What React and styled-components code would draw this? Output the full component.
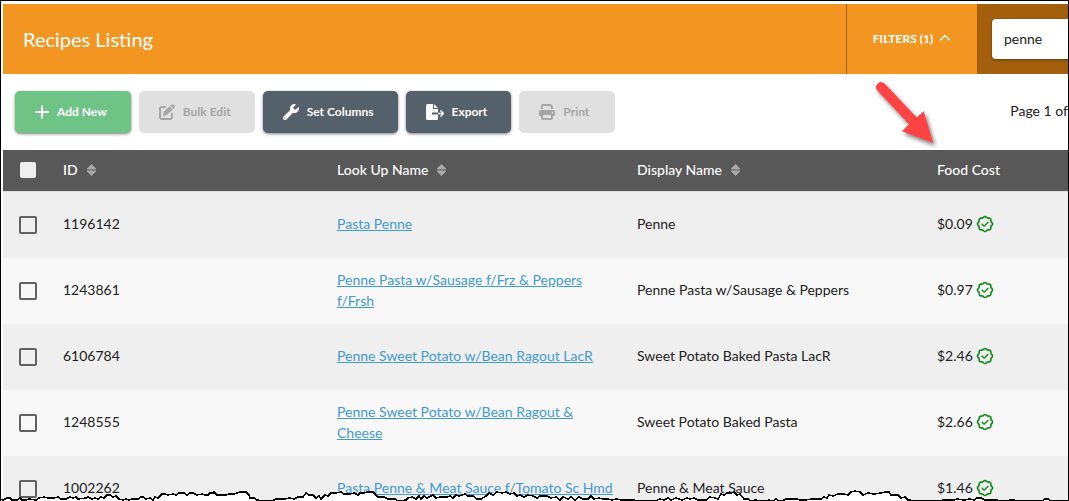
import styled, { createGlobalStyle } from "styled-components";
import { FaWrench } from "react-icons/fa";
import { FaPenToSquare, FaPrint } from "react-icons/fa6";

const palette = {
    orange: '#f39621',
    brown: '#a35f0b',
    green: '#6ec485',
    slate: '#55616a',
    disabled: '#e0e0e0',
    disabledText: '#a6a6a6',
    head: '#585858',
    link: '#3f9bd0',
    text: '#212121',
    ok: '#138a1b',
}

const GlobalStyle = createGlobalStyle`
    * {
        box-sizing: border-box;
    }
    body {
        margin: 0;
        background: #fff;
        color: ${palette.text};
        font-family: Lato, "Liberation Sans", sans-serif;
        font-size: 14px;
        line-height: 21px;
    }
    button, input {
        font-family: inherit;
    }
`

// black frame around the page, the bottom is closed by the torn edge
const Frame = styled.div`
    position: relative;
    height: 100vh;
    overflow: hidden;
    border: 1px solid #000;
    border-bottom: none;
    padding: 3px 0 0 2px;
`

const Header = styled.header`
    display: flex;
    height: 70px;
    background: ${palette.orange};
    color: #fff;
`

const Title = styled.h1`
    flex: 1;
    margin: 0;
    padding: 0 20px;
    align-self: center;
    font-size: 20px;
    font-weight: 400;
    line-height: 28px;
`

const FilterButton = styled.button`
    display: flex;
    align-items: center;
    justify-content: center;
    gap: 6px;
    width: 131px;
    padding: 0 0 2px;
    border: none;
    border-left: 1px solid ${palette.brown};
    background: none;
    color: #fff;
    font-size: 12px;
    font-weight: 700;
`

const SearchArea = styled.div`
    display: flex;
    align-items: center;
    width: 91px;
    padding-left: 15px;
    overflow: hidden;
    background: ${palette.brown};
`

const SearchInput = styled.input`
    flex: none;
    width: 200px;
    height: 40px;
    padding: 0 12px 2px;
    border: none;
    border-radius: 4px;
    background: #fff;
    box-shadow: 0 1px 3px rgba(0, 0, 0, 0.4);
    color: ${palette.text};
    font-size: 14px;
`

const Toolbar = styled.div`
    display: flex;
    align-items: center;
    gap: 8px;
    padding: 17px 0 17px 12px;
`

const ToolButton = styled.button`
    display: flex;
    align-items: center;
    gap: 8px;
    min-width: 96px;
    height: 42px;
    padding: 0 24px 0 20px;
    border: none;
    border-radius: 5px;
    background: ${({ $color }) => $color};
    box-shadow: 0 1px 3px rgba(0, 0, 0, 0.5);
    color: #fff;
    font-size: 12px;
    font-weight: 700;
    line-height: 18px;
    &:disabled {
        background: ${palette.disabled};
        box-shadow: none;
        color: ${palette.disabledText};
    }
`

const ButtonLabel = styled.span`
    padding-bottom: 1px;
`

const PageInfo = styled.span`
    margin-left: auto;
    padding-bottom: 3px;
    white-space: nowrap;
`

const Table = styled.table`
    width: 100%;
    table-layout: fixed;
    border-collapse: separate;
    border-spacing: 0;
`

const Col = styled.col`
    width: ${({ $width }) => $width};
`

const HeadCell = styled.th`
    height: 42px;
    padding: 0 10px 2px;
    border-bottom: 1px solid #e0e0e0;
    background: ${palette.head};
    color: #fff;
    font-weight: 500;
    text-align: left;
`

const HeadLabel = styled.span`
    display: flex;
    align-items: center;
    gap: 9px;
`

const Row = styled.tr`
    background: #f8f8f8;
    &:nth-child(odd) {
        background: #efefef;
    }
`

const Cell = styled.td`
    height: 66px;
    padding: 0 10px 3px;
`

const CheckCell = styled(Cell)`
    padding: 0 0 0 16px;
`

const CheckHeadCell = styled(HeadCell)`
    padding: 0 0 1px 17px;
`

const Checkbox = styled.input`
    appearance: none;
    display: block;
    width: 18px;
    height: 18px;
    margin: 0;
    border: 2px solid #616161;
    border-radius: 2px;
`

const HeadCheckbox = styled(Checkbox)`
    width: 16px;
    height: 16px;
    border: none;
    background: #eee;
`

const RecipeLink = styled.a`
    color: ${palette.link};
    text-decoration: underline;
`

const Cost = styled.span`
    display: flex;
    align-items: center;
    gap: 2px;
    svg {
        color: ${palette.ok};
    }
`

const ArrowMark = styled.svg`
    position: absolute;
    top: 75px;
    left: 869px;
    filter: drop-shadow(2px 3px 2px rgba(0, 0, 0, 0.5));
    pointer-events: none;
`

const TornEdge = styled.svg`
    position: absolute;
    left: -1px;
    bottom: 0;
    width: calc(100% + 2px);
    height: 30px;
    pointer-events: none;
`

const PlusIcon = () => (
    <svg width="14" height="14" viewBox="0 0 14 14" stroke="currentColor" strokeWidth="2" fill="none">
        <path d="M7 0.5V13.5M0.5 7H13.5" />
    </svg>
)

const ExportIcon = () => (
    <svg width="18" height="16" viewBox="0 0 18 16">
        <path fill="currentColor" d="M1.5 0H7v5h5v3.5H6v2h6V14.5a1.5 1.5 0 0 1-1.5 1.5h-9A1.5 1.5 0 0 1 0 14.5v-13A1.5 1.5 0 0 1 1.5 0ZM8 0l4 4H8Z" />
        <path fill="none" stroke="currentColor" strokeWidth="1.5" d="M12 9.5h5M14.5 6.5l3 3-3 3" />
    </svg>
)

const ChevronUp = () => (
    <svg width="12" height="8" viewBox="0 0 12 8" fill="none" stroke="currentColor" strokeWidth="1.5">
        <path d="M1 6.5l5-5 5 5" />
    </svg>
)

const SortIcon = () => (
    <svg width="9" height="12" viewBox="0 0 9 12" fill="#a9a9a9">
        <path d="M4.5 0L9 4.5V5.5H0V4.5ZM0 6.5H9V7.5L4.5 12L0 7.5Z" />
    </svg>
)

const VerifiedIcon = () => (
    <svg width="20" height="20" viewBox="0 0 24 24" fill="none" stroke="currentColor" strokeLinejoin="round">
        <path strokeWidth="2" d="M5 7.2a2.2 2.2 0 0 1 2.2 -2.2h1a2.2 2.2 0 0 0 1.55 -.64l.7 -.7a2.2 2.2 0 0 1 3.12 0l.7 .7c.412 .41 .97 .64 1.55 .64h1a2.2 2.2 0 0 1 2.2 2.2v1c0 .58 .23 1.138 .64 1.55l.7 .7a2.2 2.2 0 0 1 0 3.12l-.7 .7a2.2 2.2 0 0 0 -.64 1.55v1a2.2 2.2 0 0 1 -2.2 2.2h-1a2.2 2.2 0 0 0 -1.55 .64l-.7 .7a2.2 2.2 0 0 1 -3.12 0l-.7 -.7a2.2 2.2 0 0 0 -1.55 -.64h-1a2.2 2.2 0 0 1 -2.2 -2.2v-1a2.2 2.2 0 0 0 -.64 -1.55l-.7 -.7a2.2 2.2 0 0 1 0 -3.12l.7 -.7a2.2 2.2 0 0 0 .64 -1.55v-1" />
        <path strokeWidth="1.6" d="M8 11.8l3 2.8l5 -5" />
    </svg>
)

const columns = [
    { label: 'ID', sortable: true },
    { label: 'Look Up Name', sortable: true },
    { label: 'Display Name', sortable: true },
    { label: 'Food Cost', sortable: false },
]

const recipes = [
    { id: '1196142', lookUp: 'Pasta Penne', display: 'Penne', cost: '$0.09' },
    { id: '1243861', lookUp: 'Penne Pasta w/Sausage f/Frz & Peppers f/Frsh', display: 'Penne Pasta w/Sausage & Peppers', cost: '$0.97' },
    { id: '6106784', lookUp: 'Penne Sweet Potato w/Bean Ragout LacR', display: 'Sweet Potato Baked Pasta LacR', cost: '$2.46' },
    { id: '1248555', lookUp: 'Penne Sweet Potato w/Bean Ragout & Cheese', display: 'Sweet Potato Baked Pasta', cost: '$2.66' },
    { id: '1002262', lookUp: 'Pasta Penne & Meat Sauce f/Tomato Sc Hmd', display: 'Penne & Meat Sauce', cost: '$1.46' },
]

const tornLine = "0,28 3,29 7,27 10,27 12,29 17,29 20,27 22,29 26,29 29,28 36,29 39,27 44,26 48,27 54,27 58,26 61,28 66,28 70,26 73,27 76,26 78,28 86,27 88,26 92,28 95,27 98,28 101,26 104,27 107,24 110,24 113,26 116,25 119,28 123,29 126,28 129,29 132,28 138,28 141,26 143,26 146,28 150,27 153,29 155,26 158,27 162,23 165,23 168,24 173,23 176,24 179,22 184,22 187,24 190,22 193,22 197,24 202,23 205,24 208,24 210,22 213,22 214,21 217,24 226,24 229,23 234,23 237,22 240,21 246,21 249,24 250,27 254,27 257,29 263,30 272,30 276,28 284,28 290,27 294,28 298,26 303,26 306,22 309,24 313,24 316,27 319,25 321,28 325,24 328,25 331,22 336,22 341,21 344,23 350,23 354,22 358,24 360,22 364,22 367,21 373,21 375,23 378,26 384,26 388,28 395,28 398,30 406,29 408,27 412,26 416,28 419,25 421,28 424,25 427,27 433,24 436,27 440,26 447,26 450,25 453,27 456,24 459,25 465,23 468,25 473,25 477,28 481,28 486,25 489,22 493,24 497,21 502,22 506,21 510,23 514,22 517,25 520,24 524,26 528,24 533,25 537,27 540,25 547,25 551,27 556,26 560,29 563,26 568,28 571,26 575,29 579,26 583,28 588,28 591,25 594,28 599,27 603,28 608,28 612,29 616,28 622,29 632,29 642,30 655,30 660,28 664,29 668,27 671,29 676,27 682,29 687,27 690,28 694,27 698,29 706,29 710,26 715,27 718,28 721,23 724,24 727,22 731,22 734,21 737,24 740,23 744,28 748,28 751,30 755,29 764,30 769,29 773,30 776,28 779,30 784,29 786,28 797,28 800,29 805,29 812,28 821,28 824,26 827,27 829,24 833,25 838,23 844,23 848,24 851,21 855,20 860,21 863,24 868,22 874,23 881,22 885,21 889,21 891,24 898,24 901,27 905,26 908,29 920,30 936,30 944,29 954,29 957,28 964,29 970,28 974,29 977,27 981,27 985,29 997,29 1002,30 1012,29 1025,30 1042,30 1045,28 1048,28 1051,30 1069,30"

const HeadText = ({ column }) => (
    <HeadLabel>
        {column.label}
        {column.sortable && <SortIcon />}
    </HeadLabel>
)

const App = () => {
    return (
        <>
            <GlobalStyle />
            <Frame>
                <Header>
                    <Title>Recipes Listing</Title>
                    <FilterButton type="button">FILTERS (1) <ChevronUp /></FilterButton>
                    <SearchArea>
                        <SearchInput type="text" aria-label="Search recipes" defaultValue="penne" />
                    </SearchArea>
                </Header>
                <Toolbar>
                    <ToolButton type="button" $color={palette.green}><PlusIcon /><ButtonLabel>Add New</ButtonLabel></ToolButton>
                    <ToolButton type="button" disabled><FaPenToSquare size={16} /><ButtonLabel>Bulk Edit</ButtonLabel></ToolButton>
                    <ToolButton type="button" $color={palette.slate}><FaWrench size={16} /><ButtonLabel>Set Columns</ButtonLabel></ToolButton>
                    <ToolButton type="button" $color={palette.slate}><ExportIcon /><ButtonLabel>Export</ButtonLabel></ToolButton>
                    <ToolButton type="button" disabled><FaPrint size={16} /><ButtonLabel>Print</ButtonLabel></ToolButton>
                    <PageInfo>Page 1 of</PageInfo>
                </Toolbar>
                <Table>
                    <colgroup>
                        <Col $width="50px" />
                        <Col $width="274px" />
                        <Col $width="300px" />
                        <Col $width="300px" />
                        <Col $width="auto" />
                    </colgroup>
                    <thead>
                        <tr>
                            <CheckHeadCell><HeadCheckbox type="checkbox" aria-label="Select all recipes" /></CheckHeadCell>
                            {columns.map(column => (
                                <HeadCell key={column.label}><HeadText column={column} /></HeadCell>
                            ))}
                        </tr>
                    </thead>
                    <tbody>
                        {recipes.map(({ id, lookUp, display, cost }) => (
                            <Row key={id}>
                                <CheckCell><Checkbox type="checkbox" aria-label={`Select ${display}`} /></CheckCell>
                                <Cell>{id}</Cell>
                                <Cell><RecipeLink href="#">{lookUp}</RecipeLink></Cell>
                                <Cell>{display}</Cell>
                                <Cell><Cost>{cost} <VerifiedIcon /></Cost></Cell>
                            </Row>
                        ))}
                    </tbody>
                </Table>
                <ArrowMark width="76" height="80" viewBox="870 76 76 80">
                    <path fill="#fd4343" d="M884.5 83.5L916.7 117.5L923.7 111.3L933.3 143L902 131.3L909 124.3L877 90A5 5 0 0 1 884.5 83.5Z" />
                </ArrowMark>
                {/* torn bottom edge */}
                <TornEdge viewBox="0 0 1069 30" preserveAspectRatio="none">
                    <polygon fill="#fff" points={`${tornLine} 1069,32 0,32`} />
                    <polyline fill="none" stroke="#000" strokeWidth="1.5" shapeRendering="crispEdges" points={tornLine} />
                </TornEdge>
            </Frame>
        </>
    );
};

export default App;
